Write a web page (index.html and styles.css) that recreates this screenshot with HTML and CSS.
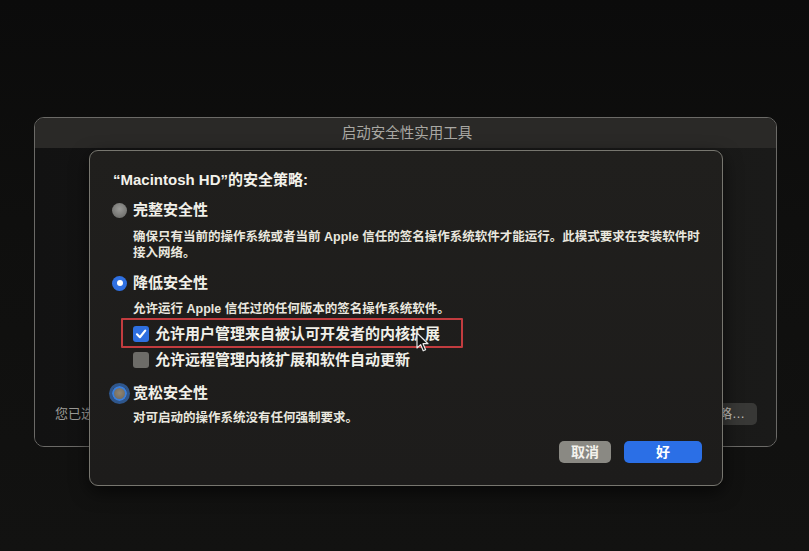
FILE: index.html
```html
<!DOCTYPE html>
<html lang="zh-CN">
<head>
<meta charset="utf-8">
<title>启动安全性实用工具</title>
<link rel="stylesheet" href="styles.css">
</head>
<body>
<div class="screen">
  <div class="window">
    <div class="titlebar">启动安全性实用工具</div>
    <div class="win-body">
      <div class="win-footer">
        <span class="win-note">您已选</span>
        <span class="win-btn">安全策略…</span>
      </div>
    </div>
  </div>

  <div class="sheet">
    <div class="heading">“Macintosh HD”的安全策略:</div>

    <div class="option o1">
      <span class="radio radio-off"></span>
      <span class="label">完整安全性</span>
    </div>
    <div class="desc d1">
      <div class="line">确保只有当前的操作系统或者当前 Apple 信任的签名操作系统软件才能运行。此模式要求在安装软件时</div>
      <div class="line">接入网络。</div>
    </div>

    <div class="option o2">
      <span class="radio radio-on"></span>
      <span class="label">降低安全性</span>
    </div>
    <div class="desc d2">允许运行 Apple 信任过的任何版本的签名操作系统软件。</div>

    <div class="check c1">
      <span class="box box-on"><svg viewBox="0 0 16 16" width="16" height="16"><path d="M4 8.3 L6.9 11.2 L12.2 4.6" fill="none" stroke="#fff" stroke-width="2.2" stroke-linecap="round" stroke-linejoin="round"/></svg></span>
      <span class="label">允许用户管理来自被认可开发者的内核扩展</span>
    </div>
    <div class="check c2">
      <span class="box box-off"></span>
      <span class="label">允许远程管理内核扩展和软件自动更新</span>
    </div>

    <div class="option o3">
      <span class="radio radio-focus"></span>
      <span class="label">宽松安全性</span>
    </div>
    <div class="desc d3">对可启动的操作系统没有任何强制要求。</div>

    <div class="buttons">
      <span class="btn btn-cancel">取消</span>
      <span class="btn btn-ok">好</span>
    </div>
  </div>

  <svg class="cursor" width="14" height="21" viewBox="0 0 14 21"><path d="M1 1 L1 16 L4.6 12.6 L7.2 18.8 L9.6 17.8 L7 11.7 L12 11.7 Z" fill="#111" stroke="#e8e8e8" stroke-width="1.2" stroke-linejoin="round"/></svg>
</div>
</body>
</html>
```

FILE: styles.css
```css
html, body {
  margin: 0;
  padding: 0;
}
body {
  width: 809px;
  height: 551px;
  overflow: hidden;
  background: linear-gradient(180deg, #0b0b0b 0%, #0f0f0e 40%, #121211 100%);
  font-family: "Liberation Sans", "Noto Sans CJK SC", sans-serif;
}
.screen {
  position: relative;
  width: 809px;
  height: 551px;
  box-sizing: border-box;
  padding: 117px 0 0 34px;
}
.window {
  width: 743px;
  height: 330px;
  box-sizing: border-box;
  border: 1px solid #6b6a67;
  border-radius: 10px;
  background: #171716;
  display: flex;
  flex-direction: column;
  overflow: hidden;
}
.titlebar {
  height: 30px;
  flex: none;
  background: #2a2927;
  color: #a9a8a3;
  font-size: 14.5px;
  line-height: 30px;
  text-align: center;
  padding-left: 3px;
}
.win-body {
  flex: 1;
  display: flex;
  flex-direction: column;
  justify-content: flex-end;
  background: linear-gradient(90deg, #121212 0%, #1a1a19 100%);
}
.win-footer {
  display: flex;
  justify-content: space-between;
  align-items: center;
  padding: 0 19px 21px 20px;
}
.win-note {
  color: #9d9c98;
  font-size: 13px;
  line-height: 22px;
  white-space: nowrap;
}
.win-btn {
  background: #383836;
  color: #c2c1bc;
  font-size: 13px;
  line-height: 22px;
  padding: 0 12px 0 20px;
  border-radius: 5px;
}
.sheet {
  position: absolute;
  left: 89px;
  top: 150px;
  width: 634px;
  height: 336px;
  box-sizing: border-box;
  border: 1px solid #77766f;
  border-radius: 9px;
  background: linear-gradient(180deg, #201f1d 0%, #1d1c1b 100%);
  box-shadow: 0 6px 18px rgba(0,0,0,0.6);
  padding: 19px 20px 0 22px;
  color: #f0efe8;
  display: flex;
  flex-direction: column;
  align-items: flex-start;
}
.heading {
  font-size: 15px;
  font-weight: 700;
  line-height: 20px;
  color: #f3f2eb;
  margin-left: 1px;
}
.option, .check {
  display: flex;
  align-items: center;
  height: 20px;
}
.option .label, .check .label {
  font-size: 15px;
  font-weight: 700;
  line-height: 20px;
  color: #f1f0e9;
}
.option { gap: 6px; }
.check { gap: 6px; margin-left: 21px; }
.o1 { margin-top: 10px; }
.o2 { margin-top: 12px; }
.o3 { margin-top: 13px; }
.desc {
  margin-left: 21px;
  font-size: 12.5px;
  font-weight: 700;
  line-height: 16px;
  color: #e9e7df;
  white-space: nowrap;
}
.d1 { margin-top: 9px; }
.d2 { margin-top: 8px; }
.d3 { margin-top: 7px; }
.c1 { margin-top: 7px; position: relative; }
.c1::after {
  content: "";
  position: absolute;
  left: -12px;
  right: -23px;
  top: -6px;
  bottom: -4px;
  border: 2.5px solid #c23c3f;
  border-radius: 1px;
}
.c2 { margin-top: 6px; }
.radio {
  width: 15px;
  height: 15px;
  border-radius: 50%;
  box-sizing: border-box;
  flex: none;
}
.radio-off {
  background: radial-gradient(circle at 50% 40%, #9a9a97 0%, #747471 70%, #666663 100%);
}
.radio-on {
  background: #2f70e2;
  display: flex;
  align-items: center;
  justify-content: center;
}
.radio-on::after {
  content: "";
  width: 6px;
  height: 6px;
  border-radius: 50%;
  background: #fff;
}
.radio-focus {
  border: 2.5px solid #3a7fdc;
  background: radial-gradient(circle at 50% 45%, #8f8573 0%, #6c665c 100%);
  box-shadow: 0 0 0 3px rgba(58, 125, 215, 0.6);
}
.box {
  width: 16px;
  height: 16px;
  border-radius: 3px;
  flex: none;
  display: flex;
}
.box-on { background: #2f6fe0; }
.box-off { background: #6d6c68; }
.buttons {
  align-self: stretch;
  display: flex;
  justify-content: flex-end;
  gap: 13px;
  margin-top: 15px;
}
.btn {
  height: 22px;
  line-height: 22px;
  border-radius: 5px;
  font-size: 14px;
  font-weight: 700;
  text-align: center;
}
.btn-cancel {
  width: 52px;
  background: #8a8983;
  color: #f3f2ec;
}
.btn-ok {
  width: 78px;
  background: #2b6fe6;
  color: #ffffff;
}
.cursor {
  position: absolute;
  left: 416px;
  top: 332px;
}
```
